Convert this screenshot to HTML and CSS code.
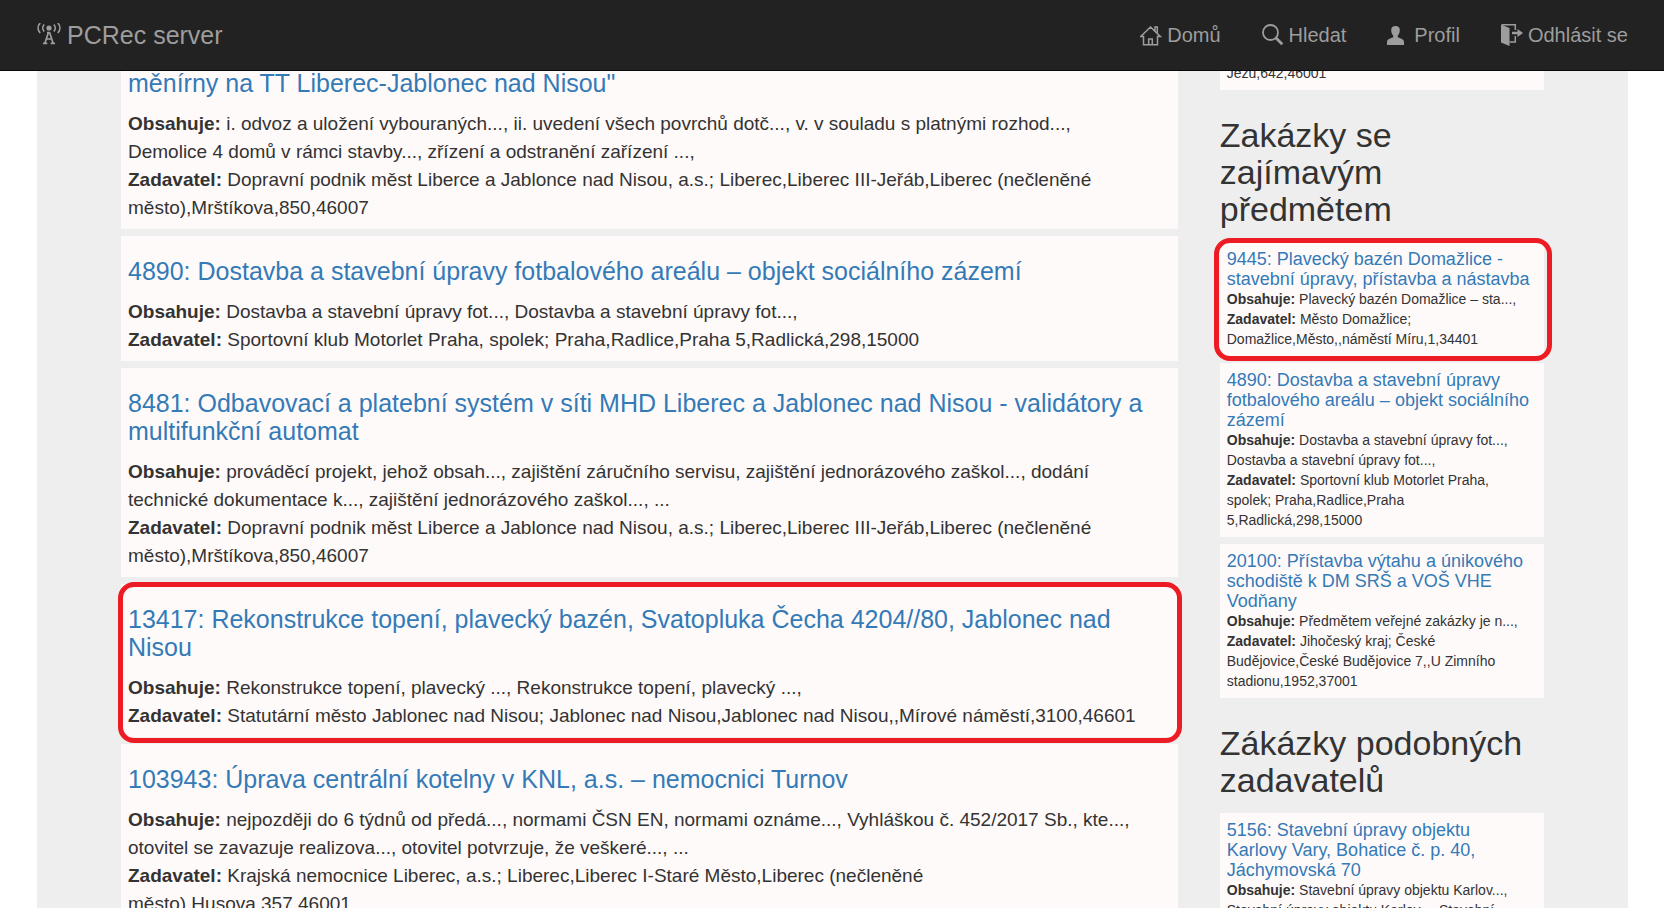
FILE: index.html
```html
<!DOCTYPE html>
<html lang="cs">
<head>
<meta charset="utf-8">
<title>PCRec server</title>
<meta name="viewport" content="width=device-width, initial-scale=1">
<link rel="stylesheet" href="styles.css">
</head>
<body>
<header class="navbar">
  <a class="brand" href="#">
    <svg class="brand-icon" viewBox="0 0 24 24" aria-hidden="true">
      <circle cx="12" cy="5" r="2.6" fill="currentColor"/>
      <g fill="none" stroke="currentColor" stroke-width="1.700">
        <path d="M3.200 0C.4 3 .4 7 3.200 10M20.800 0C23.600 3 23.600 7 20.800 10M7.200 1.500C5.300 3.500 5.300 6.500 7.200 8.500M16.800 1.500C18.700 3.500 18.700 6.500 16.800 8.500"/>
        <path d="M10 9.700H13M11.400 9.500L8 20M12.600 9.500L16 20M9.300 16H14.700M6 20.300H10.300M13.700 20.300H18"/>
      </g>
    </svg>
    <span>PCRec server</span>
  </a>
  <nav class="menu" aria-label="Hlavní menu">
    <a class="menu-link" href="#">
      <svg class="menu-icon" viewBox="0 0 22 22" fill="none" stroke="currentColor" stroke-width="1.500" aria-hidden="true">
        <path d="M.7 12.500L10.500 3L20.300 12.500H17.500V20.800H3.500V12.500ZM15 7V3H17.300V9.500M8.700 20.800V15H12.300V20.800"/>
      </svg>
      <span>Domů</span>
    </a>
    <a class="menu-link" href="#">
      <svg class="menu-icon" viewBox="0 0 22 22" fill="none" stroke="currentColor" aria-hidden="true">
        <circle cx="8.500" cy="8.500" r="7.500" stroke-width="1.800"/>
        <path d="M14 14L20.300 20.300" stroke-width="2.800"/>
      </svg>
      <span>Hledat</span>
    </a>
    <a class="menu-link" href="#">
      <svg class="menu-icon" viewBox="0 0 22 22" fill="currentColor" aria-hidden="true">
        <path d="M8.500 2C11.300 2 12.800 3.600 12.800 6C12.800 8.500 12 10.200 10.800 11.500V13.300C13 14.300 17 15 17 18V21H0V18C0 15 4 14.300 6.200 13.300V11.500C5 10.200 4.200 8.500 4.200 6C4.200 3.600 5.700 2 8.500 2Z"/>
      </svg>
      <span>Profil</span>
    </a>
    <a class="menu-link" href="#">
      <svg class="menu-icon" viewBox="0 0 22 22" aria-hidden="true">
        <path d="M0 .5L8.500 4V22L0 18.500Z" fill="currentColor"/>
        <path d="M.7 .8H14.300V6M14.300 12V18H8.500" fill="none" stroke="currentColor" stroke-width="1.500"/>
        <path d="M11 7.700H16.500V5L22 9L16.500 13V10.300H11Z" fill="currentColor"/>
      </svg>
      <span>Odhlásit se</span>
    </a>
  </nav>
</header>

<div class="page">
  <main class="results">
    <article class="card">
      <h2 class="card-title"><a href="#">měnírny na TT Liberec-Jablonec nad Nisou"</a></h2>
      <p class="card-text"><b>Obsahuje:</b> i. odvoz a uložení vybouraných..., ii. uvedení všech povrchů dotč..., v. v souladu s platnými rozhod...,<br>Demolice 4 domů v rámci stavby..., zřízení a odstranění zařízení ...,</p>
      <p class="card-text"><b>Zadavatel:</b> Dopravní podnik měst Liberce a Jablonce nad Nisou, a.s.; Liberec,Liberec III-Jeřáb,Liberec (nečleněné město),Mrštíkova,850,46007</p>
    </article>
    <article class="card">
      <h2 class="card-title"><a href="#">4890: Dostavba a stavební úpravy fotbalového areálu – objekt sociálního zázemí</a></h2>
      <p class="card-text"><b>Obsahuje:</b> Dostavba a stavební úpravy fot..., Dostavba a stavební úpravy fot...,</p>
      <p class="card-text"><b>Zadavatel:</b> Sportovní klub Motorlet Praha, spolek; Praha,Radlice,Praha 5,Radlická,298,15000</p>
    </article>
    <article class="card">
      <h2 class="card-title"><a href="#">8481: Odbavovací a platební systém v síti MHD Liberec a Jablonec nad Nisou - validátory a multifunkční automat</a></h2>
      <p class="card-text"><b>Obsahuje:</b> prováděcí projekt, jehož obsah..., zajištění záručního servisu, zajištění jednorázového zaškol..., dodání<br>technické dokumentace k..., zajištění jednorázového zaškol..., ...</p>
      <p class="card-text"><b>Zadavatel:</b> Dopravní podnik měst Liberce a Jablonce nad Nisou, a.s.; Liberec,Liberec III-Jeřáb,Liberec (nečleněné město),Mrštíkova,850,46007</p>
    </article>
    <article class="card card-marked">
      <h2 class="card-title"><a href="#">13417: Rekonstrukce topení, plavecký bazén, Svatopluka Čecha 4204//80, Jablonec nad Nisou</a></h2>
      <p class="card-text"><b>Obsahuje:</b> Rekonstrukce topení, plavecký ..., Rekonstrukce topení, plavecký ...,</p>
      <p class="card-text"><b>Zadavatel:</b> Statutární město Jablonec nad Nisou; Jablonec nad Nisou,Jablonec nad Nisou,,Mírové náměstí,3100,46601</p>
    </article>
    <article class="card">
      <h2 class="card-title"><a href="#">103943: Úprava centrální kotelny v KNL, a.s. – nemocnici Turnov</a></h2>
      <p class="card-text"><b>Obsahuje:</b> nejpozději do 6 týdnů od předá..., normami ČSN EN, normami oznáme..., Vyhláškou č. 452/2017 Sb., kte...,<br>otovitel se zavazuje realizova..., otovitel potvrzuje, že veškeré..., ...</p>
      <p class="card-text"><b>Zadavatel:</b> Krajská nemocnice Liberec, a.s.; Liberec,Liberec I-Staré Město,Liberec (nečleněné<br>město),Husova,357,46001</p>
    </article>
  </main>

  <aside class="sidebar">
    <article class="tile">
      <p class="tile-text">Jezu,642,46001</p>
    </article>
    <h2 class="sidebar-title">Zakázky se zajímavým předmětem</h2>
    <article class="tile tile-marked">
      <h3 class="tile-title"><a href="#">9445: Plavecký bazén Domažlice - stavební úpravy, přístavba a nástavba</a></h3>
      <p class="tile-text"><b>Obsahuje:</b> Plavecký bazén Domažlice – sta...,</p>
      <p class="tile-text"><b>Zadavatel:</b> Město Domažlice; Domažlice,Město,,náměstí Míru,1,34401</p>
    </article>
    <article class="tile">
      <h3 class="tile-title"><a href="#">4890: Dostavba a stavební úpravy fotbalového areálu – objekt sociálního zázemí</a></h3>
      <p class="tile-text"><b>Obsahuje:</b> Dostavba a stavební úpravy fot..., Dostavba a stavební úpravy fot...,</p>
      <p class="tile-text"><b>Zadavatel:</b> Sportovní klub Motorlet Praha, spolek; Praha,Radlice,Praha 5,Radlická,298,15000</p>
    </article>
    <article class="tile">
      <h3 class="tile-title"><a href="#">20100: Přístavba výtahu a únikového schodiště k DM SRŠ a VOŠ VHE Vodňany</a></h3>
      <p class="tile-text"><b>Obsahuje:</b> Předmětem veřejné zakázky je n...,</p>
      <p class="tile-text"><b>Zadavatel:</b> Jihočeský kraj; České Budějovice,České Budějovice 7,,U Zimního stadionu,1952,37001</p>
    </article>
    <h2 class="sidebar-title">Zákázky podobných zadavatelů</h2>
    <article class="tile">
      <h3 class="tile-title"><a href="#">5156: Stavební úpravy objektu<br>Karlovy Vary, Bohatice č. p. 40,<br>Jáchymovská 70</a></h3>
      <p class="tile-text"><b>Obsahuje:</b> Stavební úpravy objektu Karlov..., Stavební úpravy objektu Karlov..., Stavební</p>
    </article>
  </aside>
</div>
</body>
</html>
```
FILE: styles.css
```css
* {
  box-sizing: border-box;
}

html {
  scrollbar-width: none;
}

body {
  margin: 0;
  background: #fff;
  color: #333;
  font-family: "Liberation Sans", Arial, sans-serif;
  font-size: 20px;
  line-height: 28px;
}

a {
  color: #337ab7;
  text-decoration: none;
}

/* Top bar */
.navbar {
  position: fixed;
  top: 0;
  left: 0;
  right: 0;
  z-index: 10;
  display: flex;
  justify-content: space-between;
  align-items: center;
  padding: 21px 36px 21px 37px;
  background: #222;
  border-bottom: 1px solid #080808;
}

.brand,
.menu-link {
  display: flex;
  align-items: center;
  color: #9d9d9d;
}

.brand {
  gap: 6px;
  font-size: 25px;
}

.brand-icon {
  width: 24px;
  height: 24px;
}

.menu {
  display: flex;
  gap: 41px;
}

.menu-link {
  gap: 5px;
}

.menu-icon {
  width: 22px;
  height: 22px;
}

/* Page body */
.page {
  display: grid;
  grid-template-columns: repeat(12, minmax(0, 1fr));
  column-gap: 42px;
  margin: 0 36px 0 37px;
  padding: 48px 84px 0;
  background: #eee;
}

.results {
  grid-column: span 9;
}

.sidebar {
  grid-column: span 3;
  padding-top: 8px;
}

/* Result cards */
.card,
.tile {
  position: relative;
  margin-bottom: 7px;
  padding: 7px;
  background: #fffafa;
}

.card {
  font-size: 19px;
}

.card-title {
  margin: 14px 0 13px;
  font-size: 25px;
  font-weight: 400;
  line-height: 28px;
}

.card-text,
.tile-text {
  margin: 0;
}

/* Sidebar tiles */
.sidebar-title {
  margin: 27px 0 14px;
  font-size: 34px;
  font-weight: 400;
  line-height: 37px;
}

.tile {
  font-size: 14px;
  line-height: 20px;
}

.tile-title {
  margin: 0;
  font-size: 18px;
  font-weight: 400;
  line-height: 20px;
}

/* Red frame around a highlighted entry */
.card-marked::after,
.tile-marked::after {
  content: "";
  position: absolute;
  z-index: 1;
  border: 5px solid #ed1c24;
  border-radius: 16px;
  pointer-events: none;
}

.card-marked::after {
  inset: -2px -4px -6px -3px;
}

.tile-marked::after {
  inset: -4px -8px -5px -6px;
}
```
